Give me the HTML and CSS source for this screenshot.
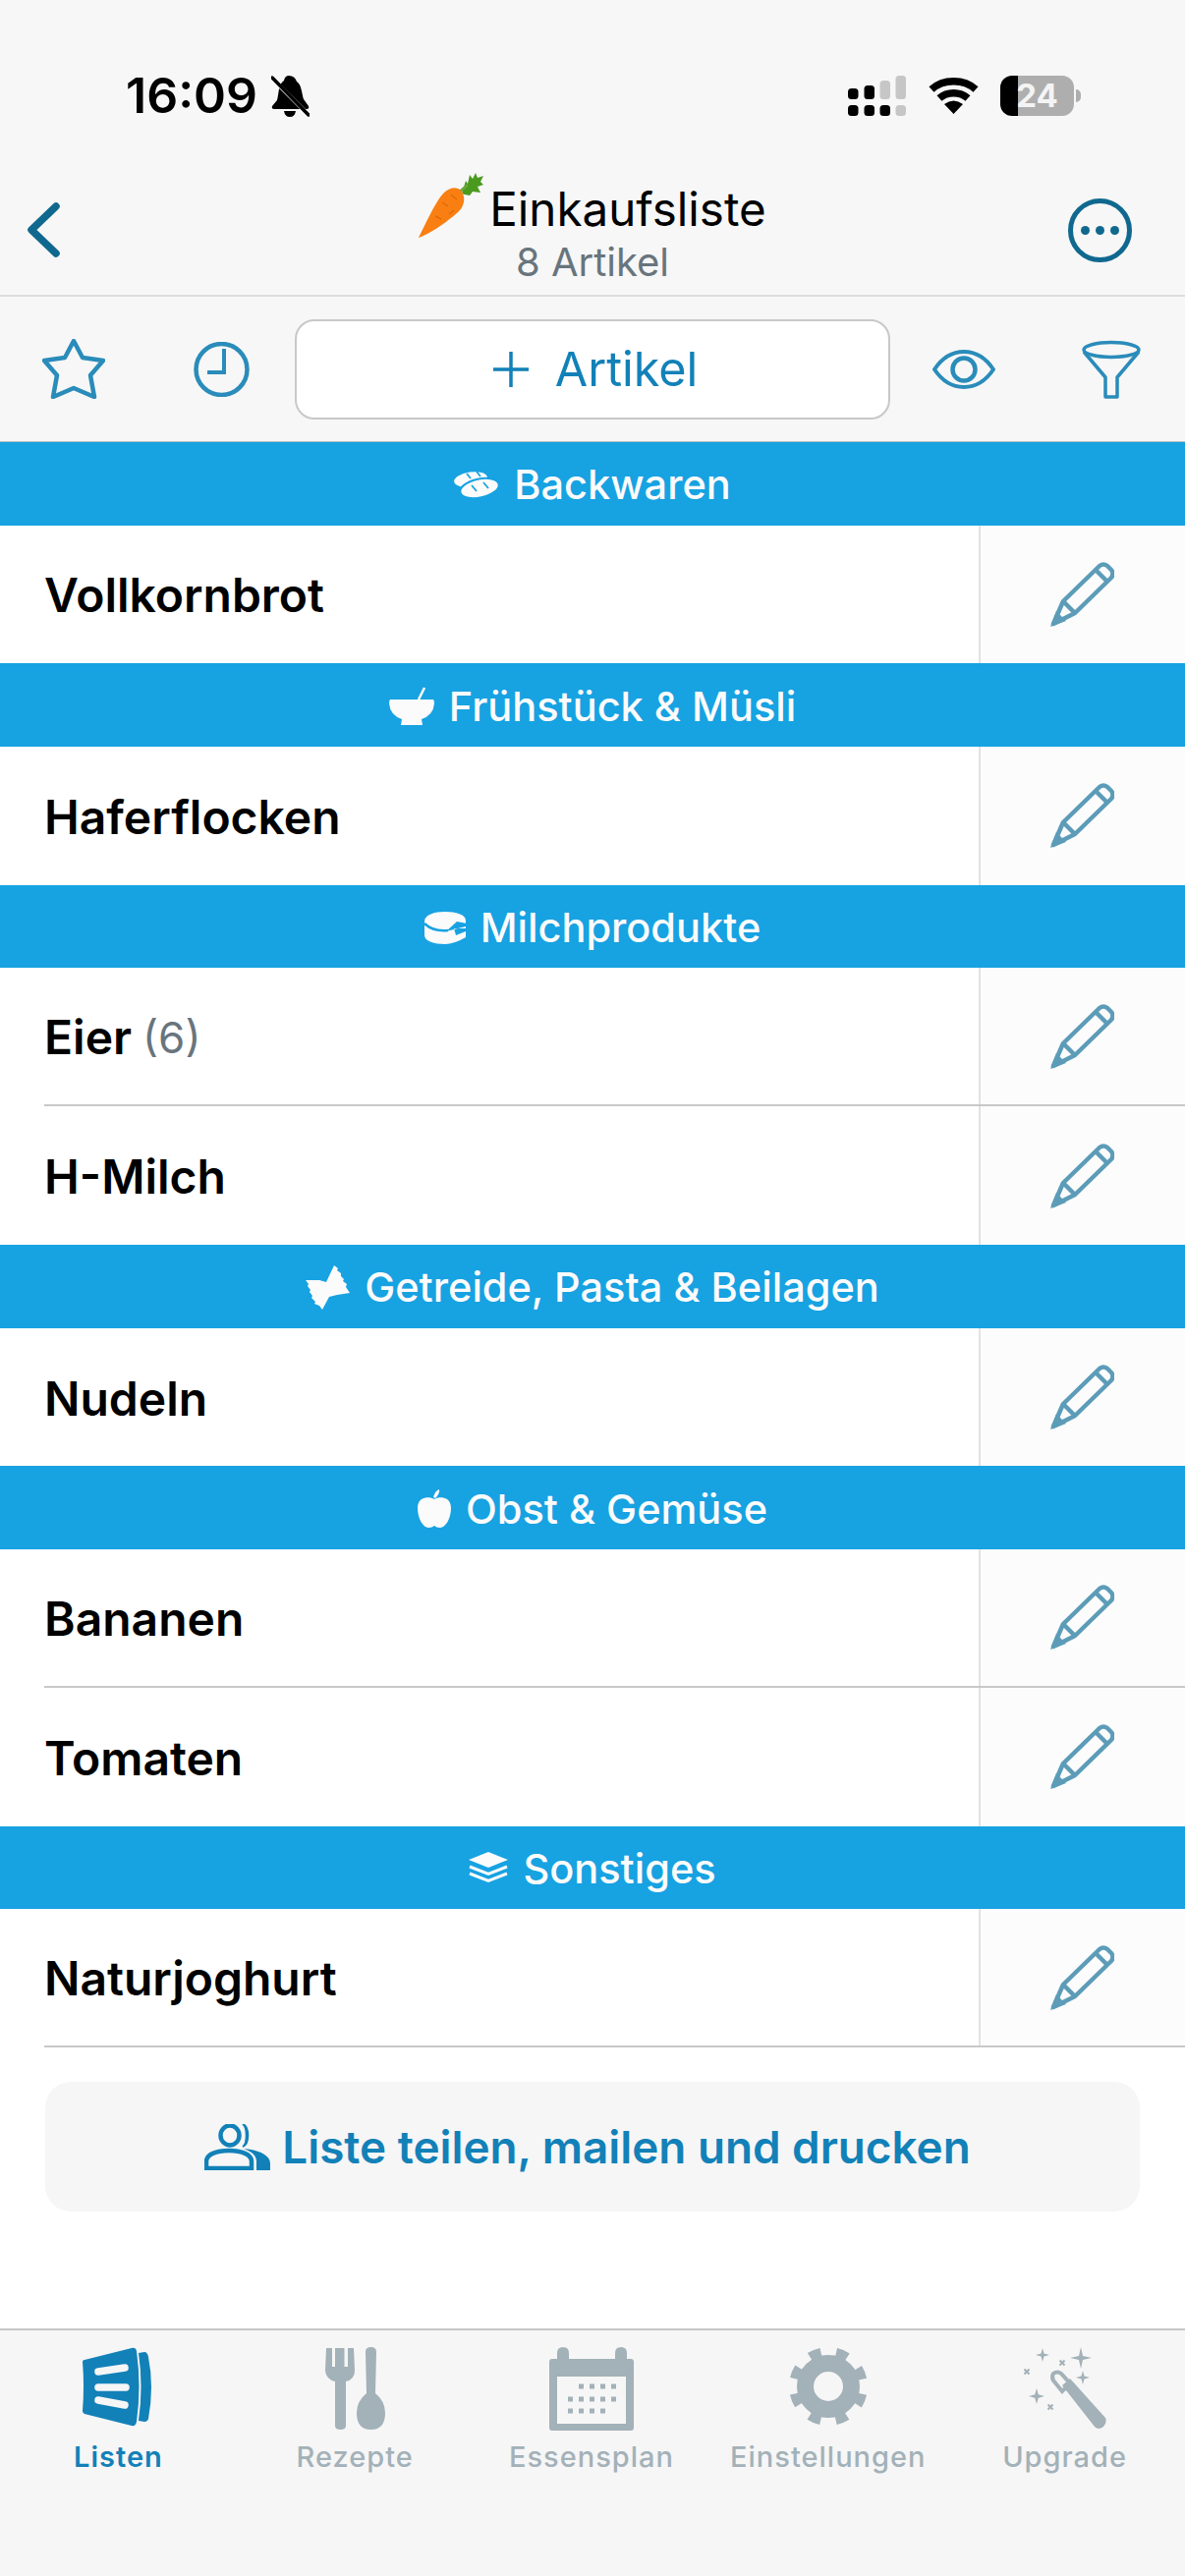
FILE: index.html
```html
<!DOCTYPE html>
<html lang="de">
<head>
    <meta charset="UTF-8">
    <meta name="viewport" content="width=device-width, initial-scale=1.0">
    <title>Einkaufsliste</title>
    <link rel="stylesheet" href="styles.css">
</head>
<body>
    <svg class="sprites" width="0" height="0">
        <symbol id="pencil" viewBox="0 0 65 66">
            <path d="M3 63L13 40L50 4Q54 1 58 4L62 8Q65 12 62 16L25 52Z" fill="none" stroke="currentColor" stroke-width="4.5" stroke-linejoin="round"/>
            <path d="M46 8L58 20M13 40L25 52" fill="none" stroke="currentColor" stroke-width="4.5"/>
            <path d="M0 66L6 50L16 60Z" fill="currentColor"/>
        </symbol>
    </svg>

    <header class="top">
        <div class="status">
            <div class="status-left">
                <span class="time">16:09</span>
                <svg class="bell" width="39" height="42" viewBox="0 0 39 42">
                    <path d="M18 0Q24 0 26 6C31 9 31 18 33 24L38 31Q39 34 36 34H3Q0 34 1 31L6 25C8 18 7 9 13 5Q14 0 18 0Z" fill="#000"/>
                    <path d="M13 36H25Q24 42 19 42Q14 42 13 36Z" fill="#000"/>
                    <path d="M-2 0L36 38" stroke="#f7f7f7" stroke-width="4"/>
                    <path d="M1 2L38 40" stroke="#000" stroke-width="3.5" stroke-linecap="round"/>
                </svg>
            </div>
            <div class="status-right">
                <svg width="60" height="41" viewBox="0 0 60 41">
                    <rect x="0" y="13" width="10.5" height="11" rx="3.5" fill="#000"/>
                    <rect x="16.5" y="10" width="10.5" height="14" rx="3.5" fill="#000"/>
                    <rect x="32.5" y="5" width="10.5" height="19" rx="3.5" fill="#c6c6c6"/>
                    <rect x="48.5" y="0" width="10.5" height="24" rx="3.5" fill="#c6c6c6"/>
                    <rect x="0" y="30" width="10.5" height="11" rx="3.5" fill="#000"/>
                    <rect x="16.5" y="30" width="10.5" height="11" rx="3.5" fill="#000"/>
                    <rect x="32.5" y="30" width="10.5" height="11" rx="3.5" fill="#000"/>
                    <rect x="48.5" y="30" width="10.5" height="11" rx="3.5" fill="#c6c6c6"/>
                </svg>
                <svg width="51" height="37" viewBox="0 0 51 37">
                    <path d="M3 12C15 1 36 1 48 12" fill="none" stroke="#000" stroke-width="7.5"/>
                    <path d="M11 21C19 14 32 14 40 21" fill="none" stroke="#000" stroke-width="7.5"/>
                    <path d="M25.5 37L16 27Q25.5 20 35 27Z" fill="#000"/>
                </svg>
                <div class="battery">24</div>
            </div>
        </div>

        <nav class="nav">
            <svg class="nav-back" width="33" height="56" viewBox="0 0 33 56">
                <path d="M29 4L4 28L29 52" fill="none" stroke="#10688f" stroke-width="7.5" stroke-linecap="round" stroke-linejoin="round"/>
            </svg>
            <div class="nav-title">
                <h1>
                    <svg class="carrot" width="66" height="66" viewBox="0 0 66 66">
                        <path d="M44 21L48 8L50 11L52 2L55 6L58 0L60 5L66 3L63 9L66 12L60 14L63 20L55 19L52 23L47 22Z" fill="#4a9a1f"/>
                        <path d="M41 20L50 12" stroke="#6aa83a" stroke-width="3"/>
                        <path d="M0 66C8 50 18 28 26 20C32 14 40 14 43 18C48 24 47 32 42 38C32 48 12 62 0 66Z" fill="#f97f12"/>
                        <path d="M24 30L30 34M33 22L39 27M17 44L23 47M31 42L36 38" stroke="#e06a08" stroke-width="1.5"/>
                    </svg>
                    <span>Einkaufsliste</span>
                </h1>
                <p>8 Artikel</p>
            </div>
            <svg class="nav-more" width="65" height="65" viewBox="0 0 65 65">
                <circle cx="32.5" cy="32.5" r="30" fill="none" stroke="#10688f" stroke-width="5"/>
                <circle cx="17.5" cy="32.5" r="4.5" fill="#10688f"/>
                <circle cx="32.5" cy="32.5" r="4.5" fill="#10688f"/>
                <circle cx="47.5" cy="32.5" r="4.5" fill="#10688f"/>
            </svg>
        </nav>

        <div class="toolbar">
            <svg width="64" height="61" viewBox="0 0 64 61">
                <path d="M32 2L41 19L62 22L49 37L53 59L32 50L11 59L15 37L2 22L23 19Z" fill="none" stroke="#2a8cba" stroke-width="4.5" stroke-linejoin="round"/>
            </svg>
            <svg width="57" height="56" viewBox="0 0 57 56">
                <circle cx="28.5" cy="28" r="26" fill="none" stroke="#2a8cba" stroke-width="4.5"/>
                <path d="M31 7V31H14" fill="none" stroke="#2a8cba" stroke-width="4"/>
            </svg>
            <button class="add-btn">
                <svg width="36" height="36" viewBox="0 0 36 36">
                    <path d="M18 0V36M0 18H36" stroke="#1281b8" stroke-width="3.5"/>
                </svg>
                Artikel
            </button>
            <svg width="64" height="40" viewBox="0 0 64 40">
                <path d="M2 20C18 -4 46 -4 62 20C46 44 18 44 2 20Z" fill="none" stroke="#2a8cba" stroke-width="4"/>
                <circle cx="32" cy="20" r="11.5" fill="none" stroke="#2a8cba" stroke-width="4.5"/>
            </svg>
            <svg width="60" height="60" viewBox="0 0 60 60">
                <ellipse cx="30" cy="10" rx="28" ry="7.5" fill="none" stroke="#2a8cba" stroke-width="3.5"/>
                <path d="M2 12L24 38V58H36V38L58 12" fill="none" stroke="#2a8cba" stroke-width="3.5" stroke-linejoin="round"/>
            </svg>
        </div>
    </header>

    <main class="list">
        <div class="band">
            <svg width="46" height="28" viewBox="0 0 46 28">
                <ellipse cx="17" cy="9" rx="17" ry="7.500" transform="rotate(-8 17 9)" fill="#fbfbfb"/>
                <ellipse cx="26" cy="18" rx="20" ry="9.500" transform="rotate(-12 26 18)" fill="#fbfbfb" stroke="#17a2e2" stroke-width="2"/>
                <path d="M13 3L17 8M23 1L27 6M18 15L23 21M30 12L35 18" stroke="#17a2e2" stroke-width="1.800"/>
            </svg>
            <span>Backwaren</span>
        </div>
        <div class="item">
            <div class="item-name">Vollkornbrot</div>
            <div class="item-edit"><svg width="65" height="66"><use href="#pencil"/></svg></div>
        </div>

        <div class="band">
            <svg width="46" height="39" viewBox="0 0 46 39">
                <path d="M30 13L36 1" stroke="#fbfbfb" stroke-width="2.5"/>
                <path d="M1 13H45Q46 14 46 17Q45 29 33 33L34 39H12L13 33Q1 29 0 17Q0 14 1 13Z" fill="#fbfbfb"/>
            </svg>
            <span>Frühstück &amp; Müsli</span>
        </div>
        <div class="item">
            <div class="item-name">Haferflocken</div>
            <div class="item-edit"><svg width="65" height="66"><use href="#pencil"/></svg></div>
        </div>

        <div class="band">
            <svg width="42" height="33" viewBox="0 0 42 33">
                <path d="M0 10C0 3 10 0 21 0C32 0 42 3 42 9V26Q30 33 21 33C10 33 0 30 0 24Z" fill="#fbfbfb"/>
                <path d="M0 12C6 18 14 20 24 19" fill="none" stroke="#17a2e2" stroke-width="2.500"/>
                <path d="M22 20L33 10L43 12V17L30 17L32 24L42 20V15Z" fill="#17a2e2"/>
            </svg>
            <span>Milchprodukte</span>
        </div>
        <div class="item with-line">
            <div class="item-name">Eier <small>(6)</small></div>
            <div class="item-edit"><svg width="65" height="66"><use href="#pencil"/></svg></div>
        </div>
        <div class="item">
            <div class="item-name">H-Milch</div>
            <div class="item-edit"><svg width="65" height="66"><use href="#pencil"/></svg></div>
        </div>

        <div class="band">
            <svg width="45" height="45" viewBox="0 0 45 45">
                <path d="M0 15L14 15L21 17L29 0L33 3L32 5L36 8L36 11L39 14L38 16L42 19L41 22L45 28L32 30L24 32L17 45L14 41L9 39L10 37L6 33L7 31L4 27L5 25L2 21L3 19Z" fill="#fbfbfb"/>
            </svg>
            <span>Getreide, Pasta &amp; Beilagen</span>
        </div>
        <div class="item">
            <div class="item-name">Nudeln</div>
            <div class="item-edit"><svg width="65" height="66"><use href="#pencil"/></svg></div>
        </div>

        <div class="band">
            <svg width="34" height="39" viewBox="0 0 34 39">
                <path d="M16 8Q18 1 22 0Q23 4 18 9Z" fill="#fbfbfb"/>
                <path d="M17 10C22 7 34 7 34 19C34 30 28 39 23 39Q19 39 17 37Q15 39 11 39C6 39 0 30 0 19C0 7 12 7 17 10Z" fill="#fbfbfb"/>
            </svg>
            <span>Obst &amp; Gemüse</span>
        </div>
        <div class="item with-line">
            <div class="item-name">Bananen</div>
            <div class="item-edit"><svg width="65" height="66"><use href="#pencil"/></svg></div>
        </div>
        <div class="item">
            <div class="item-name">Tomaten</div>
            <div class="item-edit"><svg width="65" height="66"><use href="#pencil"/></svg></div>
        </div>

        <div class="band">
            <svg width="40" height="33" viewBox="0 0 40 33">
                <path d="M20 0L40 8L20 16L0 8Z" fill="#fbfbfb"/>
                <path d="M1 15L20 22.500L39 15M1 22L20 29.500L39 22" fill="none" stroke="#fbfbfb" stroke-width="3"/>
            </svg>
            <span>Sonstiges</span>
        </div>
        <div class="item with-line">
            <div class="item-name">Naturjoghurt</div>
            <div class="item-edit"><svg width="65" height="66"><use href="#pencil"/></svg></div>
        </div>

        <button class="share-btn">
            <svg width="67" height="47" viewBox="0 0 67 47">
                <ellipse cx="26" cy="11.500" rx="9.500" ry="10" fill="none" stroke="#1281b8" stroke-width="4.500"/>
                <path d="M39 0C46 3 46 20 39 23C44 20 44 3 39 0Z" fill="#1281b8" stroke="#1281b8" stroke-width="2"/>
                <path d="M2 45V38C2 31 12 27 25 27C38 27 48 31 48 38V45Z" fill="none" stroke="#1281b8" stroke-width="4.500"/>
                <path d="M40 25C54 26 67 31 67 40V47H53V38C53 32 48 28 40 25Z" fill="#1281b8"/>
            </svg>
            Liste teilen, mailen und drucken
        </button>
    </main>

    <footer class="tabs">
        <div class="tab active">
            <svg width="72" height="81" viewBox="0 0 72 81">
                <path d="M2 13L50 1Q54 0 55 4Q60 40 55 76Q54 81 50 80L2 68Q0 67 0 65Q2 40 0 15Q0 13 2 13Z" fill="#1281b8"/>
                <path d="M57 6L63 5Q66 5 67 10Q73 40 67 73Q66 76 63 76L57 75Q62 40 57 6Z" fill="#1281b8"/>
                <path d="M16 25L43 21M16 41H44M16 54L43 59" stroke="#f6f6f6" stroke-width="7.500" stroke-linecap="round"/>
            </svg>
            <span>Listen</span>
        </div>
        <div class="tab">
            <svg width="61" height="84" viewBox="0 0 61 84">
                <path d="M1 1H7V20H10V1H19.500V20H23V1H29L30 24Q30 33 21 35V80Q21 84 15.500 84Q10 84 10 80V35Q1 33 0 24Z" fill="#a3b1b8"/>
                <path d="M41 5Q41 0 46.500 0Q52 0 52 5L51 47Q61 55 61 67Q61 84 46.500 84Q32 84 32 67Q32 55 42 47Z" fill="#a3b1b8"/>
            </svg>
            <span>Rezepte</span>
        </div>
        <div class="tab">
            <svg width="86" height="85" viewBox="0 0 86 85">
                <path d="M3 12H8V6Q8 0 14 0Q20 0 20 6V12H67V6Q67 0 73 0Q79 0 79 6V12H83Q86 12 86 15V82Q86 85 83 85H3Q0 85 0 82V15Q0 12 3 12ZM8 30V78H78V30Z" fill="#a3b1b8" fill-rule="evenodd"/>
                <path d="M30 40H68M19 53H68M19 65H57" stroke="#a3b1b8" stroke-width="5" stroke-dasharray="5 6"/>
            </svg>
            <span>Essensplan</span>
        </div>
        <div class="tab">
            <svg width="80" height="80" viewBox="0 0 80 80">
                <circle cx="40" cy="40" r="23.500" fill="none" stroke="#a3b1b8" stroke-width="17"/>
                <circle cx="40" cy="40" r="35" fill="none" stroke="#a3b1b8" stroke-width="10" stroke-dasharray="12 15.490" stroke-dashoffset="-7.740"/>
            </svg>
            <span>Einstellungen</span>
        </div>
        <div class="tab">
            <svg width="84" height="84" viewBox="0 0 84 84">
                <path d="M39 39L47 32L83 72Q85 76 81 81Q76 85 72 81Z" fill="#a3b1b8"/>
                <path d="M30 27Q34 24 38 27L47 37L39 45L30 34Q28 30 30 27Z" fill="none" stroke="#a3b1b8" stroke-width="4"/>
                <path d="M58 0L60 9L69 11L60 13L58 22L56 13L47 11L56 9Z" fill="#a3b1b8"/>
                <path d="M19 1L20.500 6.500L26 8L20.500 9.500L19 15L17.500 9.500L12 8L17.500 6.500Z" fill="#a3b1b8"/>
                <path d="M60 24L61.500 29.500L67 31L61.500 32.500L60 38L58.500 32.500L53 31L58.500 29.500Z" fill="#a3b1b8"/>
                <path d="M13 42L14.800 48.200L21 50L14.800 51.800L13 58L11.200 51.800L5 50L11.200 48.200Z" fill="#a3b1b8"/>
                <path d="M36.500 13.500L41.500 18.500M41.500 13.500L36.500 18.500M0.500 22.500L5.500 27.500M5.500 22.500L0.500 27.500M24.500 58.500L29.500 63.500M29.500 58.500L24.500 63.500" stroke="#a3b1b8" stroke-width="2"/>
            </svg>
            <span>Upgrade</span>
        </div>
    </footer>
</body>
</html>
```

FILE: styles.css
```css
:root {
    --band: #17a2e2;
    --blue: #1281b8;
    --gray: #a3b1b8;
    --bar: #f7f7f7;
}

* {
    box-sizing: border-box;
}

body {
    margin: 0;
    min-height: 2622px;
    display: flex;
    flex-direction: column;
    font-family: Inter, 'Noto Sans', sans-serif;
    background: #fff;
    color: #000;
}

svg {
    display: block;
    flex-shrink: 0;
}

.sprites {
    position: absolute;
}

/* Kopfbereich */
.top {
    background: var(--bar);
    border-bottom: 1px solid #b9bdc0;
}

.status {
    height: 118px;
    padding: 77px 113px 0 128px;
    display: flex;
    justify-content: space-between;
}

.status-left {
    display: flex;
    align-items: center;
    gap: 14px;
}

.time {
    font-size: 50px;
    font-weight: 600;
    line-height: 41px;
}

.status-right {
    display: flex;
    align-items: center;
    gap: 22px;
}

.battery {
    position: relative;
    width: 75px;
    height: 41px;
    border-radius: 12px;
    background: linear-gradient(90deg, #000 24%, #aeaeae 24%);
    color: #f4f4f4;
    font-size: 33px;
    font-weight: 700;
    line-height: 41px;
    text-align: center;
}

.battery::after {
    content: "";
    position: absolute;
    right: -7px;
    top: 14px;
    width: 5px;
    height: 13px;
    border-radius: 0 6px 6px 0;
    background: #aeaeae;
}

.nav {
    height: 184px;
    padding: 50px 54px 0;
    display: grid;
    grid-template-columns: 1fr auto 1fr;
    align-items: center;
    border-bottom: 2px solid #dedede;
}

.nav-back {
    margin-left: -26px;
}

.nav-more {
    justify-self: end;
}

.nav-title {
    display: flex;
    flex-direction: column;
    align-items: center;
    margin-top: 8px;
}

.nav-title h1 {
    margin: 0;
    display: flex;
    align-items: flex-end;
    gap: 6px;
    font-size: 47.5px;
    font-weight: 400;
    line-height: 58px;
}

.carrot {
    margin-top: -8px;
}

.nav-title p {
    margin: 0;
    font-size: 40px;
    line-height: 50px;
    color: #68757d;
}

.toolbar {
    height: 147px;
    display: grid;
    grid-template-columns: 150px 150px 1fr 150px 150px;
    align-items: center;
    justify-items: center;
}

.add-btn {
    width: 100%;
    height: 102px;
    padding-left: 12px;
    display: flex;
    align-items: center;
    justify-content: center;
    gap: 27px;
    background: #fff;
    border: 2px solid #c8c8c8;
    border-radius: 20px;
    color: var(--blue);
    font-family: inherit;
    font-size: 48.5px;
}

/* Liste */
.list {
    flex: 1;
}

.band {
    height: 84.5px;
    padding-top: 2px;
    display: flex;
    align-items: center;
    justify-content: center;
    gap: 15px;
    background: var(--band);
    color: #fbfbfb;
    font-size: 41.5px;
    font-weight: 500;
}

.item {
    height: 140.9px;
    margin-left: 45px;
    display: flex;
    align-items: stretch;
}

.item.with-line {
    border-bottom: 2px solid #c8c8c8;
}

.item-name {
    flex: 1;
    padding-top: 2px;
    display: flex;
    align-items: center;
    gap: 11px;
    font-size: 48px;
    font-weight: 600;
}

.item-name small {
    font-size: 44px;
    font-weight: 400;
    color: #68757d;
}

.item-edit {
    width: 210px;
    padding-right: 2px;
    display: flex;
    align-items: center;
    justify-content: center;
    background: #fcfcfc;
    border-left: 2px solid #e2e2e2;
    color: #5c9cb8;
}

.share-btn {
    width: 1114px;
    height: 132px;
    margin: 35px 46px 0;
    padding-right: 16px;
    display: flex;
    align-items: center;
    justify-content: center;
    gap: 12px;
    background: #f6f6f6;
    border: none;
    border-radius: 26px;
    color: var(--blue);
    font-family: inherit;
    font-size: 45.8px;
    font-weight: 600;
}

/* Tab-Leiste */
.tabs {
    height: 252px;
    padding: 17px 2px 0 0;
    display: grid;
    grid-template-columns: repeat(5, 1fr);
    align-items: start;
    background: #f6f6f6;
    border-top: 2px solid #c6c6c6;
}

.tab {
    display: flex;
    flex-direction: column;
    align-items: center;
    height: 129px;
    color: var(--gray);
    font-size: 29px;
    font-weight: 500;
    letter-spacing: 1px;
}

.tab span {
    margin-top: auto;
}

.tab.active {
    color: var(--blue);
    font-weight: 600;
}
```
